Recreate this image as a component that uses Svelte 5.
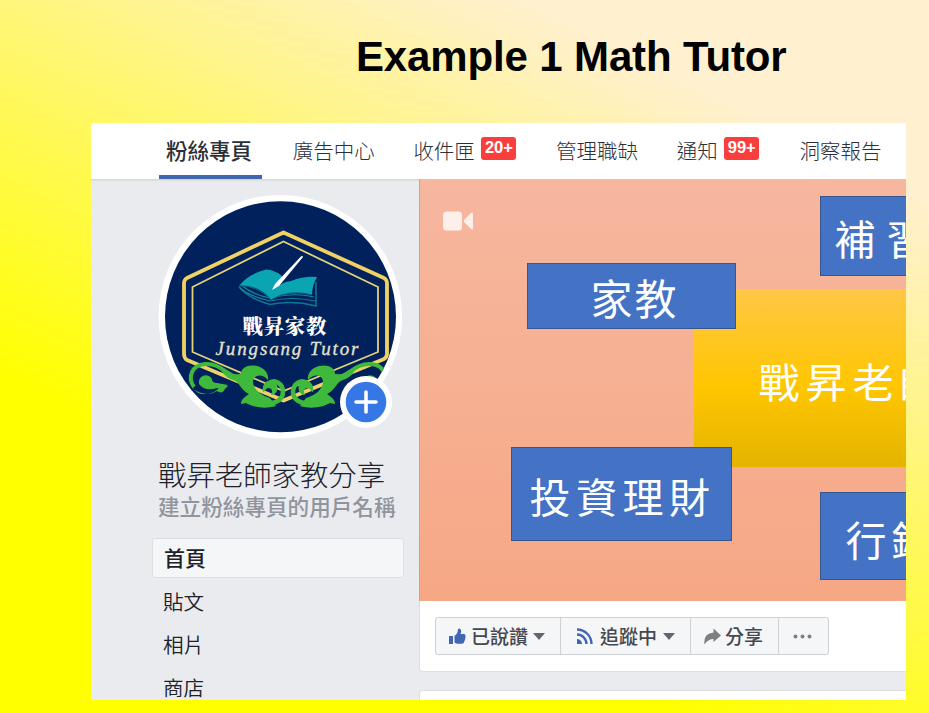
<script>
  const tabs = [
    { label: '粉絲專頁', width: 87, active: true },
    { label: '廣告中心', width: 81 },
    { label: '收件匣', width: 103, badge: '20+' },
    { label: '管理職缺', width: 81 },
    { label: '通知', width: 83, badge: '99+' },
    { label: '洞察報告', width: 82 }
  ];
  const menu = ['首頁', '貼文', '相片', '商店'];
</script>

<div class="slide">
  <h1>Example 1 Math Tutor</h1>
  <div class="panel">
    <nav>
      {#each tabs as tab}
        <div class="tab" class:active={tab.active} style:width="{tab.width}px">
          <span>{tab.label}</span>
          {#if tab.badge}<b class="badge">{tab.badge}</b>{/if}
        </div>
      {/each}
    </nav>
    <div class="body">
      <aside>
        <svg class="avatar" viewBox="0 0 260 250" width="260" height="250">
          <defs><clipPath id="disc"><circle cx="130.5" cy="126.7" r="115.5" /></clipPath></defs>
          <circle cx="130.3" cy="126.7" r="121.8" fill="#fff" />
          <circle cx="130.5" cy="126.7" r="115.5" fill="#00215b" />
          <g clip-path="url(#disc)" fill="none">
            <path d="M133.5 42.5 234 88Q237 90 237 93V164Q237 167 234 169L133.5 210.5 37 170Q34 168 34 164V93Q34 90 37 88Z" stroke="#f0d264" stroke-width="3.8" stroke-linejoin="round" />
            <path d="M133.5 51.5 228 97V162L133.5 201 42.5 162V97Z" stroke="#e2d27a" stroke-width="1.8" />
            <path d="M90 98Q100 109 120 114.500Q142 110 166 116V92" stroke="#0e7690" stroke-width="1.6" />
            <path d="M89 97Q98 106 120 111Q142 106 165 111M91 95Q103 105 120 108Q143 102 164 107" stroke="#16869b" stroke-width="1.2" />
            <path d="M89 96Q98 84 116 79.500Q125 80 132 86L126 98Q132 92 141 91Q154 86 167 87Q162 96 162 105Q140 99 121 110Q108 96 89 96Z" fill="#0ba4b3" />
            <path d="M89 96Q109 95 121 110Q139 99 162 105" stroke="#075d7b" stroke-width="1.2" />
            <path d="M122 100 125 94 150 67.500Q152.500 65 153 67L129 96Z" fill="#fff" />
            <g id="vine">
              <path d="M44 197C37 187 42 175 55 174C71 173 77 186 90 188" stroke="#3fb93c" stroke-width="4" />
              <path d="M42 193C42 201 49 205 57 204C65 203 69 199 71 194L78 196C73 200 74 205 67 201C60 206 50 204 43 199Z" fill="#3fb93c" />
              <path d="M49 194A7 7 0 0 1 62 189Q62 193 67 193L78 195Q72 199 67 198Q55 202 49 194Z" fill="#3fb93c" />
              <path d="M70 179C79 186 84 184 91 184C91 177 99 174 107 176C115 178 119 184 118 190C112 183 104 185 103 191C103 199 110 205 120 208L126 216C113 220 101 216 96 213L91 214C91 209 95 207 99 204C91 201 90 192 83 190C77 188 73 184 70 179Z" fill="#3fb93c" />
              <path d="M104 211C119 217 133 212 133 202C133 194 125 188 118 194" stroke="#3fb93c" stroke-width="4.600" />
              <path d="M113 202C111 193 119 188 125 192C130 197 127 205 121 205C123 201 122 198 118 198C116 198 115 202 113 202Z" fill="#3fb93c" />
            </g>
            <use href="#vine" transform="translate(276 0) scale(-1 1)" />
          </g>
          <text x="134.5" y="143.500" text-anchor="middle" textLength="84" class="logo-zh">戰昇家教</text>
          <text x="137" y="165" text-anchor="middle" textLength="143" class="logo-en">Jungsang Tutor</text>
          <circle cx="216" cy="212" r="26" fill="#fff" />
          <circle cx="216" cy="212" r="20.3" fill="#3578e5" />
          <path d="M216 202v20M206 212h20" stroke="#fff" stroke-width="3.6" stroke-linecap="round" />
        </svg>
        <h2>戰昇老師家教分享</h2>
        <p>建立粉絲專頁的用戶名稱</p>
        <ul>
          {#each menu as item, i}
            <li class:current={i === 0}>{item}</li>
          {/each}
        </ul>
      </aside>
      <main>
        <div class="cover">
          <svg class="camera" width="31" height="20" viewBox="0 0 31 20" fill="#fff" fill-opacity=".8">
            <rect x="0" y=".5" width="19" height="19" rx="3.5" />
            <path d="M21 9 28 2Q30 .5 30 3V17Q30 19.5 28 18L21 11Z" />
          </svg>
          <div class="node gold">戰昇老師</div>
          <div class="node tutor">家教</div>
          <div class="node cram">補習班</div>
          <div class="node invest">投資理財</div>
          <div class="node market">行銷</div>
        </div>
        <section class="actions">
          <div class="group">
            <div class="btn like">
              <svg width="17" height="17" viewBox="0 0 17 17" fill="#4267b2"><path d="M0 8h4v8H0ZM5.500 8C8 6 9 4 9 1Q11-.5 12 2Q12.400 4 11.500 6H15Q17 6.300 16.300 8.300Q17 9.500 16 10.800Q16.500 12 15.300 13Q15.500 15.500 13 15.700H9Q7 15.700 5.500 14.500Z" /></svg>
              <span>已說讚</span><i></i>
            </div>
            <div class="btn follow">
              <svg width="17" height="17" viewBox="0 0 17 17" fill="none" stroke="#4267b2" stroke-width="2.4"><path d="M1 1.500A14.500 14.500 0 0 1 15.500 16M1 6.500A9.500 9.500 0 0 1 10.500 16" /><path d="M1 11A5 5 0 0 1 6 16H1Z" fill="#4267b2" stroke="none" /></svg>
              <span>追蹤中</span><i></i>
            </div>
            <div class="btn share">
              <svg width="17" height="17" viewBox="0 0 17 17" fill="#7f7f7f"><path d="M9.500 .5 17 7.500 9.500 14V11Q4 11 .5 16.500Q-1 5.500 9.500 4.500Z" /></svg>
              <span>分享</span>
            </div>
            <div class="btn more">
              <svg width="19" height="5" viewBox="0 0 19 5" fill="#7b7f86"><circle cx="2.500" cy="2.500" r="2" /><circle cx="9.500" cy="2.500" r="2" /><circle cx="16.500" cy="2.500" r="2" /></svg>
            </div>
          </div>
        </section>
        <section class="next"></section>
      </main>
    </div>
  </div>
</div>

<style>
  .slide {
    width: 929px;
    height: 713px;
    overflow: hidden;
    box-sizing: border-box;
    padding-left: 91px;
    background: linear-gradient(26.57deg, #ff0 28.7%, #fff0d0 83%);
    font-family: "Noto Sans CJK TC", sans-serif;
    color: #1d2129;
  }
  h1 {
    margin: 0;
    height: 122.500px;
    padding-left: 265px;
    box-sizing: border-box;
    padding-top: 32px;
    font: bold 42px/50px "Liberation Sans", Arial, sans-serif;
    letter-spacing: -.14px;
    color: #000;
    white-space: nowrap;
  }
  .panel {
    width: 815px;
    height: 577.500px;
    overflow: hidden;
    background: #e9ebee;
    display: flex;
    flex-direction: column;
  }
  nav {
    height: 56.500px;
    flex: none;
    background: #fff;
    display: flex;
    gap: 39.700px;
    padding-left: 75px;
    position: relative;
    box-shadow: 0 1px 2px rgba(0, 0, 0, .12);
  }
  .tab {
    flex: none;
    display: flex;
    box-sizing: border-box;
    padding-top: 12px;
    line-height: 30px;
    font-size: 20.500px;
    font-weight: 300;
    color: #2b2f37;
    white-space: nowrap;
  }
  .active {
    font-size: 21.500px;
    font-weight: 500;
    box-shadow: 0 -4px 0 #4267b2 inset;
    padding-left: 7px;
    margin-left: -7px;
    box-sizing: content-box;
    padding-right: 9px;
    margin-right: -9px;
    height: 44.500px;
  }
  .badge {
    width: 35px;
    height: 23px;
    margin: 2px 0 0 6.500px;
    border-radius: 3px;
    background: #fa3e3e;
    color: #fff;
    font: bold 16.500px/21px "Liberation Sans", Arial, sans-serif;
    text-align: center;
  }
  .body { flex: 1; display: flex; min-height: 0; }
  aside { width: 327.500px; flex: none; }
  .avatar { display: block; margin: 11px 0 0 59px; }
  .logo-zh { font: 900 20.500px "Noto Serif CJK TC", "Noto Sans CJK TC", serif; fill: #fff; }
  .logo-en { font: italic 19px "Liberation Serif", serif; fill: #e5e2cf; stroke: #e5e2cf; stroke-width: .3px; }
  h2 {
    margin: 15px 0 0 67px;
    font-size: 28.400px;
    line-height: 38px;
    font-weight: 300;
    white-space: nowrap;
  }
  p {
    margin: 0 0 0 67px;
    font-size: 21.600px;
    line-height: 26px;
    font-weight: 500;
    color: #90949c;
    white-space: nowrap;
  }
  ul { list-style: none; margin: 19px 0 0 61px; padding: 0; width: 252px; }
  li {
    height: 43.300px;
    line-height: 40px;
    padding-left: 11px;
    font-size: 20.600px;
    font-weight: 350;
  }
  .current {
    box-sizing: border-box;
    height: 40px;
    line-height: 36px;
    margin-bottom: 2.500px;
    border: 1px solid #dddfe2;
    border-radius: 3px;
    background: #f5f6f7;
    font-size: 21px;
    font-weight: 500;
  }
  main { flex: 1; min-width: 0; }
  .cover {
    position: relative;
    height: 422px;
    box-sizing: border-box;
    border-left: 1px solid #eb9b74;
    overflow: hidden;
    background: linear-gradient(#f6b79f, #f6a885);
  }
  .camera { position: absolute; left: 23.500px; top: 32px; }
  .node {
    position: absolute;
    box-sizing: border-box;
    display: flex;
    align-items: center;
    background: #4472c4;
    border: 1px solid #35568f;
    color: #fff;
    font-size: 41px;
    font-weight: 400;
    white-space: nowrap;
  }
  .gold { left: 274px; top: 110px; width: 330px; height: 178px; padding: 3px 0 0 65px; background: linear-gradient(#ffc746, #ffc600 55%, #e3b400); border: 0; letter-spacing: 6px; }
  .tutor { left: 107px; top: 84px; width: 209px; height: 66px; padding: 0 0 0 63px; letter-spacing: 2px; font-size: 42px; }
  .cram { left: 400px; top: 17px; width: 210px; height: 80px; padding: 1px 0 0 14px; letter-spacing: 11px; }
  .invest { left: 91px; top: 268px; width: 221px; height: 94px; padding: 1px 0 0 18px; letter-spacing: 5.500px; }
  .market { left: 400px; top: 313px; width: 210px; height: 88px; padding: 3px 0 0 25px; letter-spacing: 5px; }
  section {
    box-sizing: border-box;
    background: #fff;
    border: 1px solid #dddfe2;
    border-right: 0;
  }
  .actions { height: 71px; border-top: 0; border-radius: 0 0 0 4px; padding: 16px 0 0 15.500px; }
  .next { height: 40px; margin-top: 18px; border-radius: 4px 0 0 0; }
  .group {
    display: flex;
    width: 394px;
    height: 38px;
    box-sizing: border-box;
    border: 1px solid #ccd0d5;
    border-radius: 3px;
    background: #f5f6f7;
  }
  .btn {
    box-sizing: border-box;
    flex: none;
    display: flex;
    align-items: center;
    font-size: 19px;
    font-weight: 500;
    line-height: 36px;
    color: #444850;
    border-left: 1px solid #ccd0d5;
  }
  .btn svg { flex: none; }
  .like { width: 124px; border: 0; padding-left: 13px; gap: 5px; }
  .follow { width: 130px; padding-left: 15px; gap: 7px; }
  .share { width: 88px; padding-left: 13px; gap: 4px; }
  .more { width: 50px; padding-left: 14px; }
  i {
    border: 6px solid transparent;
    border-top: 7px solid #606770;
    border-bottom: 0;
    margin-left: 0;
  }
  .follow i { margin-left: -1px; }
</style>
